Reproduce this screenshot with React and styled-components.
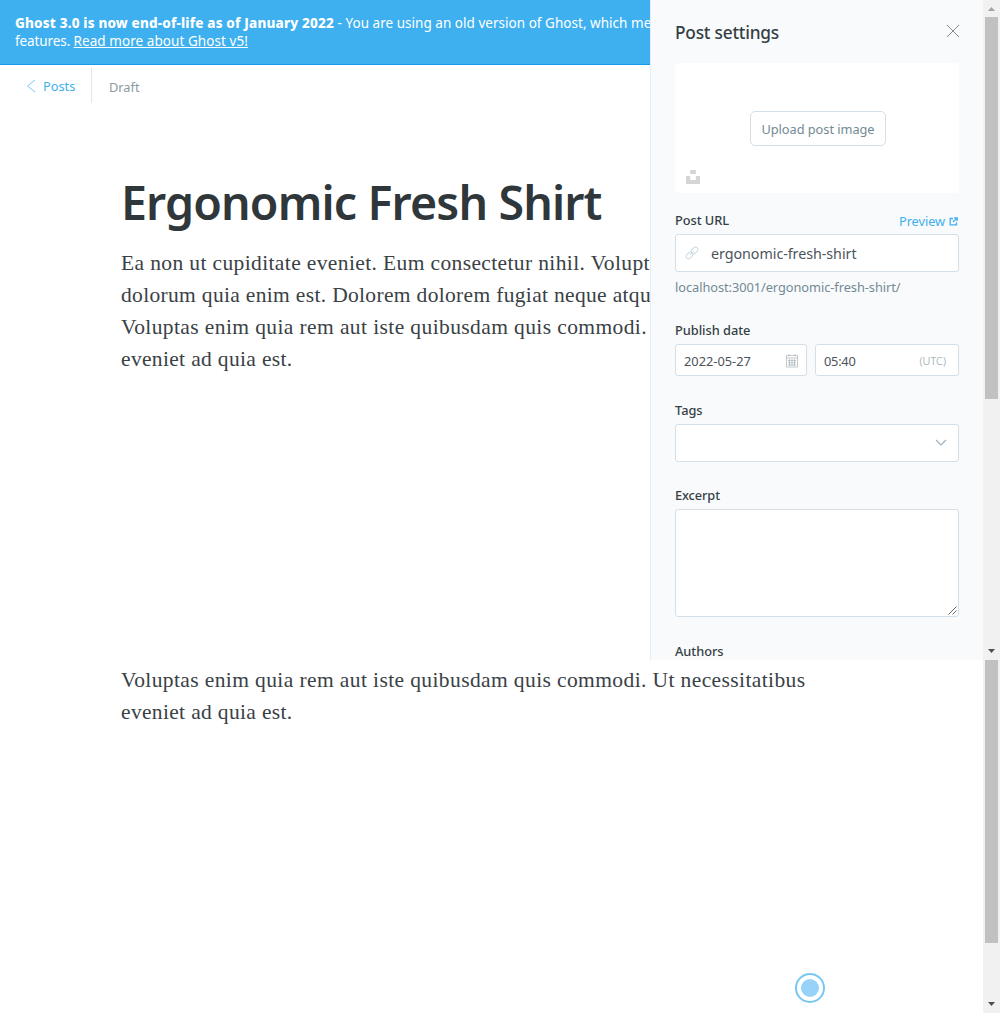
import React from "react";
import styled, { createGlobalStyle } from "styled-components";

const sans = '"Noto Sans", "Open Sans", sans-serif';
const serif = '"Liberation Serif", serif';

const Global = createGlobalStyle`
  * { box-sizing: border-box; }
  body { margin: 0; background: #fff; font-family: ${sans}; }
`;

/* Layout */
const Page = styled.div`
  width: 1000px;
  height: 1013px;
  display: flex;
  flex-direction: column;
  overflow: hidden;
  position: relative;
`;
const Pane = styled.div`
  display: flex;
  height: ${p => p.$h}px;
  overflow: hidden;
`;
const Editor = styled.main`
  flex: 1;
  min-width: 0;
  overflow: hidden;
  display: flex;
  flex-direction: column;
`;
const Text = styled.span`
  white-space: pre;
  letter-spacing: ${p => p.$ls || 0}px;
`;

/* Editor */
const Banner = styled.div`
  height: 65px;
  flex: none;
  padding: 14px 15px;
  background: #3eb0ef;
  border-bottom: 1px solid #159be9;
  color: #fff;
  font-size: 13.5px;
  line-height: 18px;
  white-space: nowrap;
  b { font-weight: 800; }
  a { color: #fff; text-decoration: underline; }
`;
const Nav = styled.nav`
  height: 41px;
  flex: none;
  display: flex;
  align-items: flex-start;
  padding: 3px 0 0 26px;
  font-size: 12.8px;
`;
const Back = styled.a`
  display: flex;
  align-items: center;
  gap: 7px;
  width: 65px;
  height: 35px;
  color: #3eb0ef;
  line-height: 18px;
`;
const Status = styled.div`
  height: 35px;
  border-left: 1px solid #dfe8ef;
  padding: 10px 0 0 17px;
  color: #8b9ba3;
  line-height: 18px;
`;
const Title = styled.h1`
  margin: 67px 0 0 121px;
  height: 58px;
  font-size: 46.5px;
  line-height: 58px;
  font-weight: 600;
  color: #2f373b;
  white-space: nowrap;
`;
const Body = styled.div`
  margin: ${p => p.$top}px 0 0 121px;
  font-family: ${serif};
  font-size: 21.5px;
  line-height: 32px;
  color: #3a4145;
`;
const Line = styled.div`
  height: 32px;
  white-space: nowrap;
`;

/* Settings panel */
const Sidebar = styled.aside`
  width: 333px;
  flex: none;
  background: #f9fafc;
  border-left: 1px solid #e3edf8;
  padding: 0 24px;
  overflow: hidden;
  display: flex;
  flex-direction: column;
`;
const SideHead = styled.header`
  height: 63px;
  flex: none;
  display: flex;
  justify-content: space-between;
  align-items: flex-start;
  padding-top: 20px;
  font-size: 17.3px;
  line-height: 26px;
  font-weight: 500;
  color: #343f44;
  svg { margin-top: 4px; }
`;
const ImageBox = styled.div`
  height: 130px;
  flex: none;
  background: #fff;
  border-radius: 4px;
  display: flex;
  flex-direction: column;
  padding: 48px 0 0 11px;
  svg { margin-top: 24px; }
`;
const Upload = styled.button`
  margin: 0 0 0 64px;
  width: 136px;
  height: 35px;
  border: 1px solid #d3e0e7;
  border-radius: 5px;
  background: #fff;
  padding: 1px 0 0;
  font: 400 12.8px ${sans};
  color: #738a94;
  white-space: nowrap;
`;
const Label = styled.label`
  display: flex;
  justify-content: space-between;
  height: 18px;
  flex: none;
  margin-top: ${p => p.$top}px;
  margin-bottom: 5px;
  font-size: 12.8px;
  line-height: 18px;
  font-weight: 500;
  color: #343f44;
`;
const Preview = styled.a`
  display: flex;
  align-items: center;
  gap: 4px;
  padding: 2px 1px 0 0;
  color: #3eb0ef;
  font-weight: 400;
`;
const Box = styled.div`
  display: flex;
  align-items: center;
  justify-content: ${p => p.$justify || "space-between"};
  gap: ${p => p.$gap || 0}px;
  height: ${p => p.$h}px;
  width: ${p => p.$w || 284}px;
  flex: none;
  padding: ${p => p.$pad || "0"};
  background: #fff;
  border: 1px solid #d3e0ea;
  border-radius: 3px;
  font-size: ${p => p.$fs || 12.8}px;
  color: #4b5459;
`;
const TextArea = styled(Box)`
  align-items: flex-end;
  justify-content: flex-end;
  padding: 0 1px 1px 0;
`;
const Helper = styled.div`
  height: 18px;
  flex: none;
  margin-top: 6px;
  margin-bottom: 1px;
  font-size: 12.8px;
  line-height: 18px;
  color: #738a94;
`;
const Row = styled.div`
  display: flex;
  gap: 8px;
  flex: none;
`;
const Utc = styled.span`
  margin-top: -2px;
  font-size: 10.8px;
  font-weight: 300;
  color: #8b9ba3;
`;

/* Scrollbars */
const Rail = styled.div`
  width: 17px;
  flex: none;
  background: #f1f1f1;
  display: flex;
  flex-direction: column;
  align-items: center;
`;
const Thumb = styled.div`
  width: 13px;
  height: ${p => p.$h}px;
  margin-bottom: auto;
  background: #c1c1c1;
`;
const Arrow = styled.div`
  height: 17px;
  width: 17px;
  flex: none;
  svg { display: block; }
`;

/* Click marker floating over the editor */
const Pointer = styled.div`
  position: absolute;
  left: 795px;
  top: 973px;
  width: 30px;
  height: 30px;
  border: 2px solid #77c7f4;
  border-radius: 50%;
  display: grid;
  place-items: center;
  &::after { content: ""; width: 18px; height: 18px; border-radius: 50%; background: #97d3f8; }
`;

const Up = () => <Arrow><svg width="17" height="17"><path d="M5 11h7L8.500 7z" fill="#a3a3a3" /></svg></Arrow>;
const Down = () => <Arrow><svg width="17" height="17"><path d="M5 6h7L8.500 10z" fill="#505050" /></svg></Arrow>;
const BackIcon = () => (
  <svg width="10" height="14"><path d="M9 1L1.500 7L9 13" fill="none" stroke="#3eb0ef" strokeWidth=".7" /></svg>
);
const CloseIcon = () => (
  <svg width="13" height="14"><path d="M1 1L13 13M13 1L1 13" stroke="#738088" strokeWidth=".9" /></svg>
);
const UnsplashIcon = () => (
  <svg width="14" height="14"><path d="M4.200 0h5.600v4h-5.600zM0 6h4.200v4h5.600v-4H14v8H0z" fill="#d5d5d5" /></svg>
);
const ExternalIcon = () => (
  <svg width="9" height="9"><path d="M4 1.500H1.200v6.300h6.300V5.300M5 .8h3.200V4M8 1L4 5" fill="none" stroke="#3eb0ef" strokeWidth="1.300" /></svg>
);
const LinkIcon = () => (
  <svg width="14" height="14" viewBox="0 0 14 14" fill="none" stroke="#cbdbe5" strokeWidth="1">
    <rect x="-3.700" y="-2.400" width="7.400" height="4.800" rx="2.400" transform="translate(9.500 4.500) rotate(-45)" />
    <rect x="-3.700" y="-2.400" width="7.400" height="4.800" rx="2.400" transform="translate(4.500 9.500) rotate(-45)" />
    <path d="M5 9l4-4" />
  </svg>
);
const Calendar = () => (
  <svg width="12" height="14" viewBox="0 0 12 14" fill="none" stroke="#a9b3b9" strokeWidth=".7">
    <path d="M.5 1.500h11v11.500H.5zM.5 4h11M3 0v2.500M9 0v2.500M2 6.500h8M2 8.700h8M2 10.900h8M3.500 5v7M6 5v7M8.500 5v7" />
  </svg>
);
const Chevron = () => (
  <svg width="12" height="7"><path d="M1 1l5 5l5-5" fill="none" stroke="#9fb2bd" strokeWidth="1.200" /></svg>
);
const Grip = () => (
  <svg width="9" height="9"><path d="M.5 8.500l8-8M4.500 8.500l4-4" stroke="#555" strokeWidth=".9" /></svg>
);

export default function App() {
  return (
    <>
      <Global />
      <Page>
        <Pane $h={660}>
          <Editor>
            <Banner>
              <b><Text $ls={0.167}>Ghost 3.0 is now end-of-life as of January 2022</Text></b>
              <Text $ls={0.03}> - You are using an old version of Ghost, which me</Text>
              <br />
              <Text $ls={-0.1}>features. </Text>
              <a href="#"><Text $ls={0.06}>Read more about Ghost v5!</Text></a>
            </Banner>
            <Nav>
              <Back><BackIcon /><Text>Posts</Text></Back>
              <Status><Text>Draft</Text></Status>
            </Nav>
            <Title><Text $ls={-0.86}>Ergonomic Fresh Shirt</Text></Title>
            <Body $top={16}>
              <Line><Text $ls={0.375}>Ea non ut cupiditate eveniet. Eum consectetur nihil. Volupt</Text></Line>
              <Line><Text $ls={0.327}>dolorum quia enim est. Dolorem dolorem fugiat neque atqu</Text></Line>
              <Line><Text $ls={0.396}>Voluptas enim quia rem aut iste quibusdam quis commodi.</Text></Line>
              <Line><Text $ls={0.336}>eveniet ad quia est.</Text></Line>
            </Body>
          </Editor>
          <Sidebar>
            <SideHead><Text $ls={-0.214}>Post settings</Text><CloseIcon /></SideHead>
            <ImageBox>
              <Upload><Text $ls={-0.051}>Upload post image</Text></Upload>
              <UnsplashIcon />
            </ImageBox>
            <Label $top={18}>
              <Text $ls={-0.057}>Post URL</Text>
              <Preview><Text $ls={-0.08}>Preview</Text><ExternalIcon /></Preview>
            </Label>
            <Box $h={38} $justify="flex-start" $gap={12} $pad="0 0 0 9px" $fs={14.3}>
              <LinkIcon /><Text $ls={-0.053}>ergonomic-fresh-shirt</Text>
            </Box>
            <Helper><Text $ls={-0.055}>localhost:3001/ergonomic-fresh-shirt/</Text></Helper>
            <Label $top={24}><Text $ls={-0.03}>Publish date</Text></Label>
            <Row>
              <Box $h={32} $w={132} $pad="2px 8px 0"><Text>2022-05-27</Text><Calendar /></Box>
              <Box $h={32} $w={144} $pad="2px 12px 0 8px"><Text $ls={-0.244}>05:40</Text><Utc><Text $ls={0.09}>(UTC)</Text></Utc></Box>
            </Row>
            <Label $top={25}><Text $ls={-0.039}>Tags</Text></Label>
            <Box $h={38} $pad="0 11px 2px" $justify="flex-end"><Chevron /></Box>
            <Label $top={24}><Text $ls={-0.1}>Excerpt</Text></Label>
            <TextArea $h={108}><Grip /></TextArea>
            <Label $top={25}><Text $ls={-0.042}>Authors</Text></Label>
          </Sidebar>
          <Rail><Up /><Thumb $h={382} /><Down /></Rail>
        </Pane>
        <Pane $h={353}>
          <Editor>
            <Body $top={4}>
              <Line><Text $ls={0.392}>Voluptas enim quia rem aut iste quibusdam quis commodi. Ut necessitatibus</Text></Line>
              <Line><Text $ls={0.336}>eveniet ad quia est.</Text></Line>
            </Body>
          </Editor>
          <Rail><Thumb $h={283} /><Down /></Rail>
        </Pane>
        <Pointer />
      </Page>
    </>
  );
}
